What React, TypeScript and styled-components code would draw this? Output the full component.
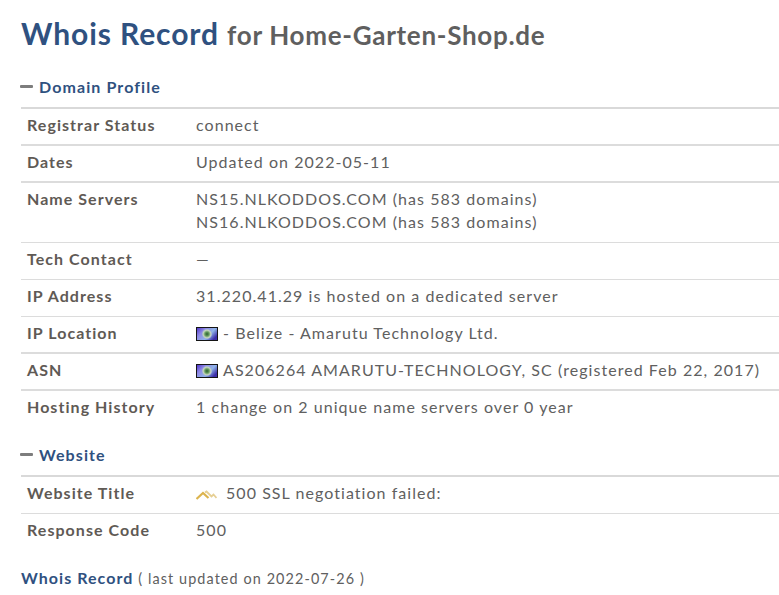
import React from "react";
import styled, { createGlobalStyle } from "styled-components";

const Global = createGlobalStyle`
  html, body { margin: 0; padding: 0; background: #fff; overflow: hidden; }
  body { font-family: Lato, "Open Sans", sans-serif; color: #606060; }
`;

const Page = styled.div`
  width: 779px;
  height: 595px;
  overflow: hidden;
  padding: 14px 0 0 21px;
  box-sizing: border-box;
`;

const Title = styled.h1`
  margin: 0;
  height: 38px;
  line-height: 38px;
  font-size: 30px;
  font-weight: 700;
  letter-spacing: 0.9px;
  color: #2f5180;
  white-space: nowrap;
`;

const TitleSub = styled.small`
  font-size: 26px;
  font-weight: 700;
  letter-spacing: 0.7px;
  color: #5f5f5f;
`;

const SectionHead = styled.div<{ $top: number }>`
  display: flex;
  align-items: center;
  gap: 6px;
  margin: ${(p) => p.$top}px 0 0 -1px;
  height: 24px;
  font-size: 16px;
  font-weight: 700;
  letter-spacing: 1.1px;
  color: #2f5180;
`;

const Dash = styled.span`
  width: 13px;
  height: 3px;
  background: #7d7d7d;
  border-radius: 1px;
`;

const Table = styled.div`
  margin-top: 9px;
  border-top: 2px solid #d9d9d9;
`;

const Row = styled.div<{ $strong?: boolean }>`
  display: grid;
  grid-template-columns: 175px 1fr;
  padding: 4px 0 ${(p) => (p.$strong ? 8 : 9)}px;
  border-bottom: ${(p) => (p.$strong ? "2px" : "1px")} solid #dcdcdc;
  font-size: 16px;
  line-height: 23px;
  letter-spacing: 1.05px;
  white-space: nowrap;
  &:last-child { border-bottom: none; }
`;

const Label = styled.div`
  padding-left: 6px;
  font-weight: 700;
  color: #5f5a55;
`;

const Value = styled.div`
  color: #606060;
`;

const FlagIcon = styled.svg`
  display: inline-block;
  width: 22px;
  height: 14px;
  vertical-align: -2px;
  margin-right: 5px;
`;

const WaveIcon = styled.svg`
  display: inline-block;
  width: 21px;
  height: 10px;
  vertical-align: -1px;
  margin-right: 9px;
`;

const Footer = styled.div`
  margin-top: 16px;
  font-size: 14.4px;
  line-height: 23px;
  letter-spacing: 1.1px;
  color: #606060;
`;

const FooterLink = styled.b`
  font-size: 16px;
  letter-spacing: 1.05px;
  color: #2f5180;
  font-weight: 700;
`;

const Flag = () => (
  <FlagIcon viewBox="0 0 22 14">
    <defs>
      <linearGradient id="flagFill" x1="0" y1="0" x2="1" y2="0.6">
        <stop offset="0" stopColor="#4a2fc8" />
        <stop offset="0.35" stopColor="#8f8ae6" />
        <stop offset="0.7" stopColor="#8fb4e8" />
        <stop offset="1" stopColor="#3d2fa8" />
      </linearGradient>
      <radialGradient id="flagEye">
        <stop offset="0" stopColor="#2f5a34" />
        <stop offset="0.4" stopColor="#5f9a58" />
        <stop offset="0.75" stopColor="#c4d2bc" />
        <stop offset="1" stopColor="#a0b0d8" />
      </radialGradient>
    </defs>
    <rect x="0.5" y="0.5" width="21" height="13" fill="url(#flagFill)" stroke="#141414" />
    <circle cx="11" cy="7" r="5" fill="url(#flagEye)" />
  </FlagIcon>
);

const Wave = () => (
  <WaveIcon viewBox="0 0 21 10">
    <path d="M0.5 9 L7 3 L12.5 8" fill="none" stroke="#dcb44e" strokeWidth="2.2" />
    <path d="M9 2.5 L10.5 1.5 L15.5 6.5 L17.5 4.5 L20.5 8" fill="none" stroke="#e6cf94" strokeWidth="1.8" />
  </WaveIcon>
);

export default function App() {
  return (
    <Page>
      <Global />
      <Title>
        Whois Record <TitleSub>for Home-Garten-Shop.de</TitleSub>
      </Title>

      <SectionHead $top={22}>
        <Dash />
        Domain Profile
      </SectionHead>
      <Table>
        <Row $strong><Label>Registrar Status</Label><Value>connect</Value></Row>
        <Row $strong><Label>Dates</Label><Value>Updated on 2022-05-11</Value></Row>
        <Row>
          <Label>Name Servers</Label>
          <Value>
            NS15.NLKODDOS.COM (has 583 domains)
            <br />
            NS16.NLKODDOS.COM (has 583 domains)
          </Value>
        </Row>
        <Row><Label>Tech Contact</Label><Value>—</Value></Row>
        <Row><Label>IP Address</Label><Value>31.220.41.29 is hosted on a dedicated server</Value></Row>
        <Row $strong><Label>IP Location</Label><Value><Flag />- Belize - Amarutu Technology Ltd.</Value></Row>
        <Row $strong><Label>ASN</Label><Value><Flag />AS206264 AMARUTU-TECHNOLOGY, SC (registered Feb 22, 2017)</Value></Row>
        <Row><Label>Hosting History</Label><Value>1 change on 2 unique name servers over 0 year</Value></Row>
      </Table>

      <SectionHead $top={15}>
        <Dash />
        Website
      </SectionHead>
      <Table>
        <Row><Label>Website Title</Label><Value><Wave />500 SSL negotiation failed:</Value></Row>
        <Row><Label>Response Code</Label><Value>500</Value></Row>
      </Table>

      <Footer>
        <FooterLink>Whois Record</FooterLink> ( last updated on 2022-07-26 )
      </Footer>
    </Page>
  );
}
